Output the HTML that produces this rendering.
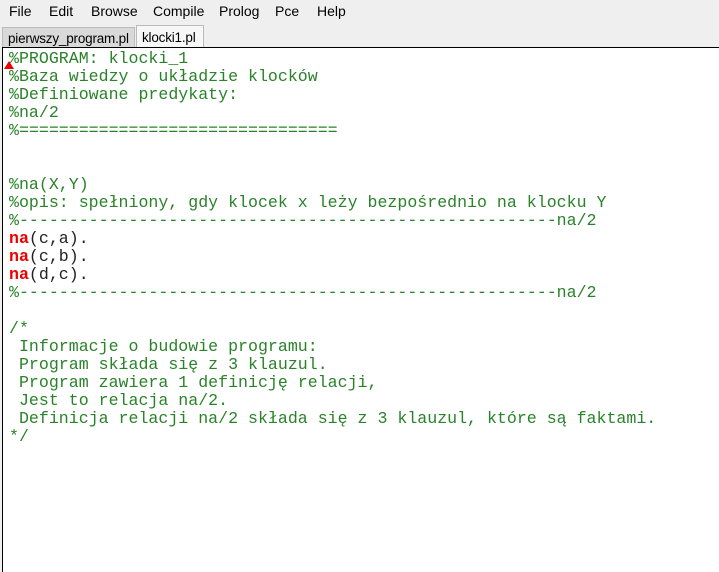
<!DOCTYPE html>
<html><head><meta charset="utf-8"><style>
body{margin:0;width:719px;height:572px;background:#efefef;overflow:hidden;position:relative;font-family:"Liberation Sans",sans-serif}
.menu{position:absolute;top:3px;left:0;font-size:14px;color:#000}
.menu span{position:absolute;white-space:nowrap}
.tab{position:absolute;top:25px;height:22px;font-size:13.5px;line-height:24px;padding:0 5px;box-sizing:border-box;white-space:nowrap;letter-spacing:-0.2px}
.ed{position:absolute;left:2px;top:47px;width:717px;height:525px;background:#fff;border-top:1px solid #000;border-left:1px solid #000;box-sizing:border-box}
pre{margin:0;position:absolute;left:6px;top:2px;font-family:"Liberation Mono",monospace;font-size:16.6px;line-height:18px;color:#222}
.c{color:#2a832a}
.r{color:#e00;font-weight:bold}
</style></head><body>
<div class="menu">
<span style="left:9px">File</span><span style="left:49px">Edit</span><span style="left:91px">Browse</span><span style="left:153px">Compile</span><span style="left:219px">Prolog</span><span style="left:275px">Pce</span><span style="left:317px">Help</span>
</div>
<div class="tab" style="left:2px;width:133px;background:#d9d9d9;border:1px solid #bbb;border-bottom:none;top:27px;height:20px;line-height:22px;padding-left:5px">pierwszy_program.pl</div>
<div class="tab" style="left:136px;width:68px;background:#f7f7f7;border:1px solid #bbb;border-bottom:none">klocki1.pl</div>
<div class="ed">
<pre><span class="c">%PROGRAM: klocki_1
%Baza wiedzy o układzie klocków
%Definiowane predykaty:
%na/2
%================================


%na(X,Y)
%opis: spełniony, gdy klocek x leży bezpośrednio na klocku Y
%------------------------------------------------------na/2</span>
<span class="r">na</span>(c,a).
<span class="r">na</span>(c,b).
<span class="r">na</span>(d,c).
<span class="c">%------------------------------------------------------na/2

/*
 Informacje o budowie programu:
 Program składa się z 3 klauzul.
 Program zawiera 1 definicję relacji,
 Jest to relacja na/2.
 Definicja relacji na/2 składa się z 3 klauzul, które są faktami.
*/</span></pre>
<svg style="position:absolute;left:1px;top:13px" width="10" height="9"><polygon points="5,0 10,8 0,8" fill="#e00"/></svg>
</div>
</body></html>
